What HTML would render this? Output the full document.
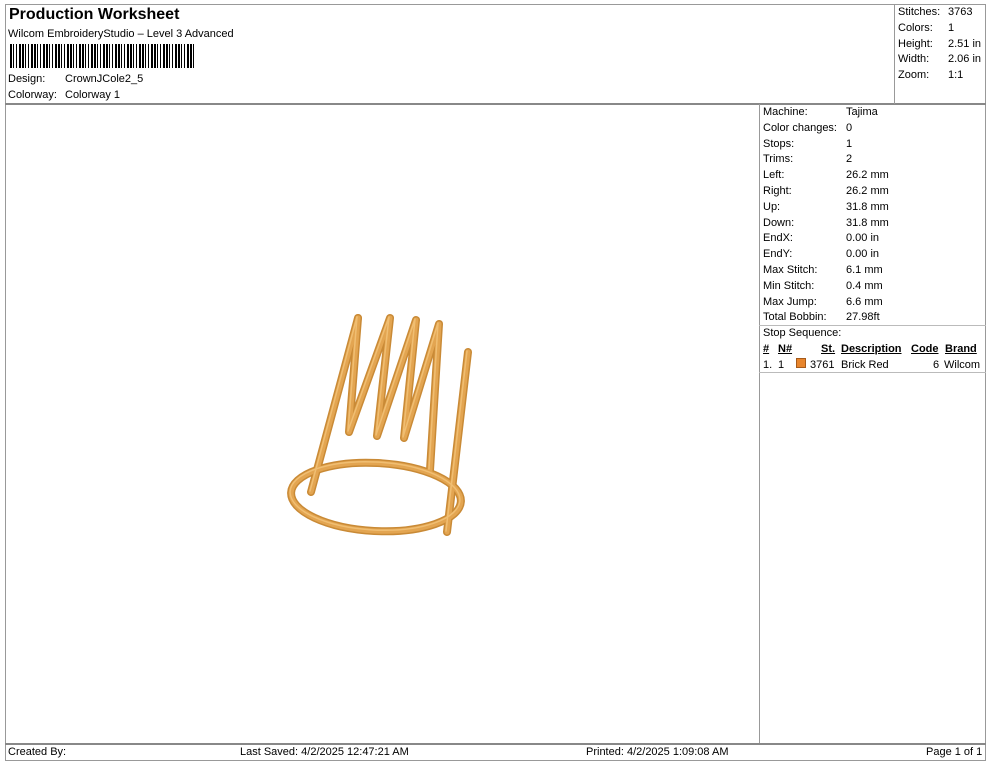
<!DOCTYPE html>
<html><head><meta charset="utf-8"><style>
*{margin:0;padding:0;box-sizing:border-box}
body{width:990px;height:762px;background:#fff;position:relative;font-family:"Liberation Sans",Arial,sans-serif;font-size:11px;color:#000;overflow:hidden}
.a{position:absolute;white-space:nowrap}
.l{position:absolute;background:#999}
.r{position:absolute;left:763px;white-space:nowrap}
.v{position:absolute;left:846px;white-space:nowrap}
</style></head><body>
<div class="l" style="left:5px;top:4px;width:981px;height:1px"></div>
<div class="l" style="left:5px;top:4px;width:1px;height:757px"></div>
<div class="l" style="left:985px;top:4px;width:1px;height:757px"></div>
<div class="l" style="left:5px;top:760px;width:981px;height:1px"></div>
<div class="l" style="left:5px;top:103px;width:981px;height:2px;background:#888"></div>
<div class="l" style="left:894px;top:4px;width:1px;height:100px"></div>
<div class="l" style="left:759px;top:104px;width:1px;height:640px"></div>
<div class="l" style="left:759px;top:325px;width:227px;height:1px;background:#bbb"></div>
<div class="l" style="left:759px;top:372px;width:227px;height:1px;background:#bbb"></div>
<div class="l" style="left:5px;top:743px;width:981px;height:2px;background:#888"></div>

<div class="a" style="left:9px;top:6px;font-size:16px;font-weight:bold">Production Worksheet</div>
<div class="a" style="left:8px;top:28px">Wilcom EmbroideryStudio – Level 3 Advanced</div>
<div class="a" style="left:10px;top:44px;width:185px;height:24px;background:repeating-linear-gradient(90deg,#000 0 2px,#fff 2px 3px,#000 3px 4px,#fff 4px 6px,#000 6px 7px,#fff 7px 9px,#000 9px 11px,#fff 11px 12px)"></div>
<div class="a" style="left:8px;top:73px">Design:</div><div class="a" style="left:65px;top:73px">CrownJCole2_5</div>
<div class="a" style="left:8px;top:89px">Colorway:</div><div class="a" style="left:65px;top:89px">Colorway 1</div>

<div class="a" style="left:898px;top:6px">Stitches:</div><div class="a" style="left:948px;top:6px">3763</div>
<div class="a" style="left:898px;top:22px">Colors:</div><div class="a" style="left:948px;top:22px">1</div>
<div class="a" style="left:898px;top:38px">Height:</div><div class="a" style="left:948px;top:38px">2.51 in</div>
<div class="a" style="left:898px;top:53px">Width:</div><div class="a" style="left:948px;top:53px">2.06 in</div>
<div class="a" style="left:898px;top:69px">Zoom:</div><div class="a" style="left:948px;top:69px">1:1</div>

<div class="r" style="top:106px">Machine:</div><div class="v" style="top:106px">Tajima</div>
<div class="r" style="top:122px">Color changes:</div><div class="v" style="top:122px">0</div>
<div class="r" style="top:138px">Stops:</div><div class="v" style="top:138px">1</div>
<div class="r" style="top:153px">Trims:</div><div class="v" style="top:153px">2</div>
<div class="r" style="top:169px">Left:</div><div class="v" style="top:169px">26.2 mm</div>
<div class="r" style="top:185px">Right:</div><div class="v" style="top:185px">26.2 mm</div>
<div class="r" style="top:201px">Up:</div><div class="v" style="top:201px">31.8 mm</div>
<div class="r" style="top:217px">Down:</div><div class="v" style="top:217px">31.8 mm</div>
<div class="r" style="top:232px">EndX:</div><div class="v" style="top:232px">0.00 in</div>
<div class="r" style="top:248px">EndY:</div><div class="v" style="top:248px">0.00 in</div>
<div class="r" style="top:264px">Max Stitch:</div><div class="v" style="top:264px">6.1 mm</div>
<div class="r" style="top:280px">Min Stitch:</div><div class="v" style="top:280px">0.4 mm</div>
<div class="r" style="top:296px">Max Jump:</div><div class="v" style="top:296px">6.6 mm</div>
<div class="r" style="top:311px">Total Bobbin:</div><div class="v" style="top:311px">27.98ft</div>
<div class="r" style="top:327px">Stop Sequence:</div>
<div class="a" style="left:763px;top:343px;font-weight:bold;text-decoration:underline">#</div>
<div class="a" style="left:778px;top:343px;font-weight:bold;text-decoration:underline">N#</div>
<div class="a" style="left:821px;top:343px;font-weight:bold;text-decoration:underline">St.</div>
<div class="a" style="left:841px;top:343px;font-weight:bold;text-decoration:underline">Description</div>
<div class="a" style="left:911px;top:343px;font-weight:bold;text-decoration:underline">Code</div>
<div class="a" style="left:945px;top:343px;font-weight:bold;text-decoration:underline">Brand</div>
<div class="a" style="left:763px;top:359px">1.</div>
<div class="a" style="left:778px;top:359px">1</div>
<div class="a" style="left:796px;top:358px;width:10px;height:10px;background:#e8852c;border:1px solid #a65a1a"></div>
<div class="a" style="left:810px;top:359px">3761</div>
<div class="a" style="left:841px;top:359px">Brick Red</div>
<div class="a" style="left:933px;top:359px">6</div>
<div class="a" style="left:944px;top:359px">Wilcom</div>

<svg class="a" style="left:0;top:0" width="990" height="762">
<g fill="none" stroke="#c98a36" stroke-width="8" stroke-linecap="round" stroke-linejoin="round">
<path d="M358,318 L311,492"/>
<path d="M358,318 L349,432 L390,318 L377,436 L416,320 L404,438 L439,324 L430,470"/>
<path d="M468,352 L447,532"/>
<ellipse cx="376" cy="497" rx="85" ry="34" transform="rotate(3 376 497)"/>
</g>
<g fill="none" stroke="#e3a551" stroke-width="5" stroke-linecap="round" stroke-linejoin="round">
<path d="M358,318 L311,492"/>
<path d="M358,318 L349,432 L390,318 L377,436 L416,320 L404,438 L439,324 L430,470"/>
<path d="M468,352 L447,532"/>
<ellipse cx="376" cy="497" rx="85" ry="34" transform="rotate(3 376 497)"/>
</g>
<g fill="none" stroke="#f0be72" stroke-width="1.5" stroke-linecap="round" stroke-linejoin="round" transform="translate(-1,-1)">
<path d="M358,318 L311,492"/>
<path d="M358,318 L349,432 L390,318 L377,436 L416,320 L404,438 L439,324 L430,470"/>
<path d="M468,352 L447,532"/>
<ellipse cx="376" cy="497" rx="85" ry="34" transform="rotate(3 376 497)"/>
</g>
</svg>

<div class="a" style="left:8px;top:746px">Created By:</div>
<div class="a" style="left:240px;top:746px">Last Saved: 4/2/2025 12:47:21 AM</div>
<div class="a" style="left:586px;top:746px">Printed: 4/2/2025 1:09:08 AM</div>
<div class="a" style="left:926px;top:746px">Page 1 of 1</div>
</body></html>
